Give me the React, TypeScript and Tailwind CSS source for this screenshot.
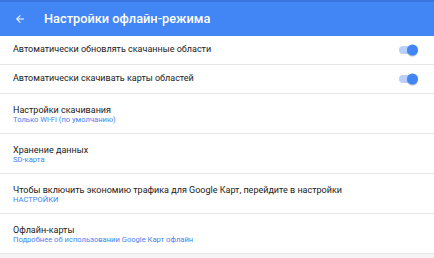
import React from "react";

function Toggle() {
  return (
    <div className="relative flex h-[10px] w-[19px] items-center">
      <div className="h-[8px] w-[16px] rounded-full bg-[#b9d0fa]" />
      <div className="absolute right-0 top-1/2 h-[11px] w-[11px] -translate-y-1/2 rounded-full bg-[#4285f4] shadow-[0_1px_1px_rgba(0,0,0,0.25)]" />
    </div>
  );
}

function ToggleRow({ label }: { label: string }) {
  return (
    <div className="flex h-[29px] items-center justify-between border-b border-[#e6e6e6] pl-[13px] pr-[16px]">
      <span className="text-[9px] text-[#212121]">{label}</span>
      <Toggle />
    </div>
  );
}

function InfoRow({ title, sub }: { title: string; sub: string }) {
  return (
    <div className="flex h-[40px] flex-col border-b border-[#e6e6e6] pl-[13px] pt-[10px]">
      <span className="text-[9px] leading-[12px] text-[#212121]">{title}</span>
      <span className="-mt-[1px] text-[7.6px] leading-[10px] text-[#4285f4]">{sub}</span>
    </div>
  );
}

export default function App() {
  return (
    <div
      className="h-[258px] w-[434px] overflow-hidden bg-[#f5f5f5]"
      style={{ fontFamily: "Roboto, 'Noto Sans', sans-serif" }}
    >
      <div className="h-[2px] bg-[#3a76e0]" />
      <div className="flex h-[34px] items-center bg-[#4285f4] shadow-[0_1px_2px_rgba(0,0,0,0.2)]">
        <svg width="12" height="12" viewBox="0 0 24 24" className="ml-[14px]">
          <path
            d="M20 11H7.83l5.59-5.59L12 4l-8 8 8 8 1.41-1.41L7.83 13H20v-2z"
            fill="#fff"
          />
        </svg>
        <span className="ml-[18px] text-[12.8px] font-medium text-white">
          Настройки офлайн-режима
        </span>
      </div>
      <div className="bg-white">
        <ToggleRow label="Автоматически обновлять скачанные области" />
        <ToggleRow label="Автоматически скачивать карты областей" />
        <InfoRow title="Настройки скачивания" sub="Только Wi-Fi (по умолчанию)" />
        <InfoRow title="Хранение данных" sub="SD-карта" />
        <InfoRow
          title="Чтобы включить экономию трафика для Google Карт, перейдите в настройки"
          sub="НАСТРОЙКИ"
        />
        <InfoRow
          title="Офлайн-карты"
          sub="Подробнее об использовании Google Карт офлайн"
        />
      </div>
    </div>
  );
}
